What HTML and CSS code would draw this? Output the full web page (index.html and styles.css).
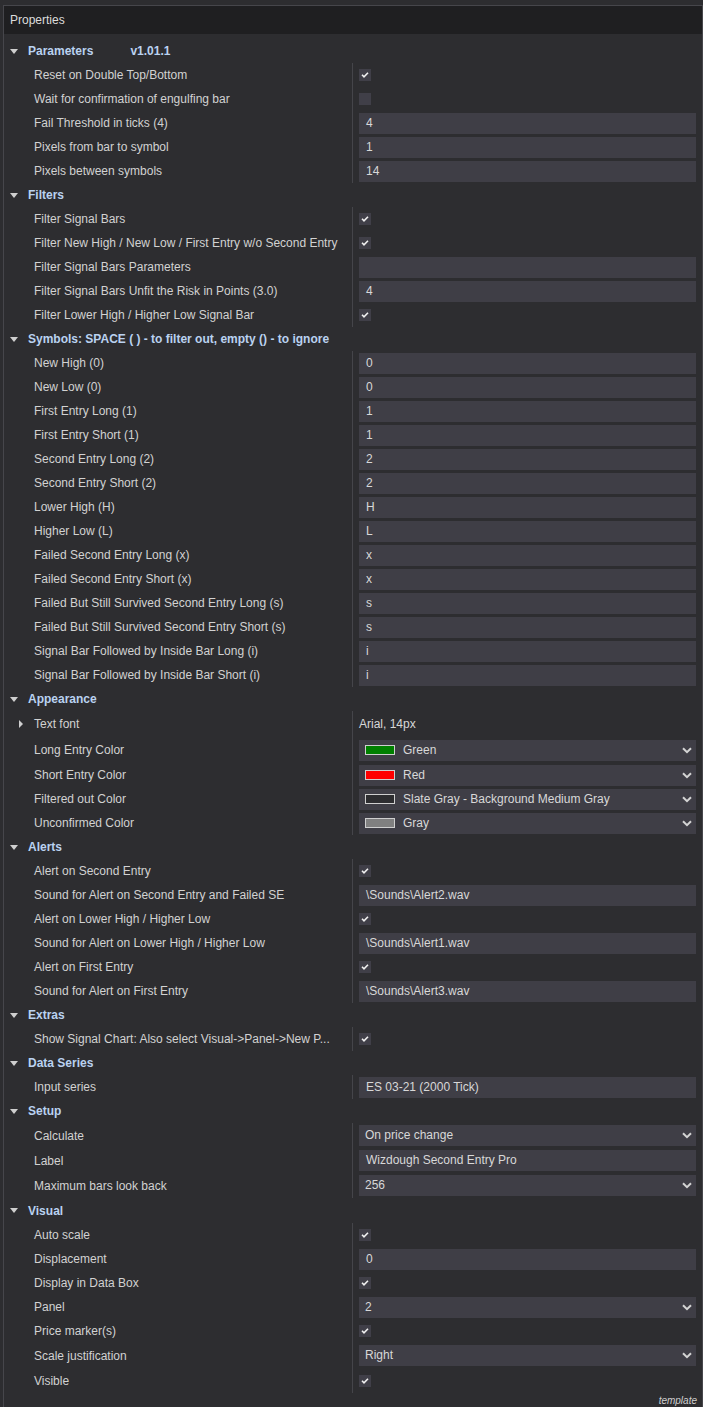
FILE: index.html
```html
<!DOCTYPE html>
<html>
<head>
	<meta charset="UTF-8">
	<title>Properties</title>
	<link rel="stylesheet" href="styles.css">
</head>
<body>
<div class="panel">
	<div class="title">Properties</div>
	<div class="list">

		<div class="row cat"><span class="tri"></span>Parameters<span class="ver">v1.01.1</span></div>
		<div class="row item"><div class="label">Reset on Double Top/Bottom</div><div class="value"><span class="check on"></span></div></div>
		<div class="row item"><div class="label">Wait for confirmation of engulfing bar</div><div class="value"><span class="check"></span></div></div>
		<div class="row item"><div class="label">Fail Threshold in ticks (4)</div><div class="value"><div class="field">4</div></div></div>
		<div class="row item"><div class="label">Pixels from bar to symbol</div><div class="value"><div class="field">1</div></div></div>
		<div class="row item"><div class="label">Pixels between symbols</div><div class="value"><div class="field">14</div></div></div>

		<div class="row cat"><span class="tri"></span>Filters</div>
		<div class="row item"><div class="label">Filter Signal Bars</div><div class="value"><span class="check on"></span></div></div>
		<div class="row item"><div class="label">Filter New High / New Low / First Entry w/o Second Entry</div><div class="value"><span class="check on"></span></div></div>
		<div class="row item"><div class="label">Filter Signal Bars Parameters</div><div class="value"><div class="field"></div></div></div>
		<div class="row item"><div class="label">Filter Signal Bars Unfit the Risk in Points (3.0)</div><div class="value"><div class="field">4</div></div></div>
		<div class="row item"><div class="label">Filter Lower High / Higher Low Signal Bar</div><div class="value"><span class="check on"></span></div></div>

		<div class="row cat"><span class="tri"></span>Symbols: SPACE ( ) - to filter out, empty () - to ignore</div>
		<div class="row item"><div class="label">New High (0)</div><div class="value"><div class="field">0</div></div></div>
		<div class="row item"><div class="label">New Low (0)</div><div class="value"><div class="field">0</div></div></div>
		<div class="row item"><div class="label">First Entry Long (1)</div><div class="value"><div class="field">1</div></div></div>
		<div class="row item"><div class="label">First Entry Short (1)</div><div class="value"><div class="field">1</div></div></div>
		<div class="row item"><div class="label">Second Entry Long (2)</div><div class="value"><div class="field">2</div></div></div>
		<div class="row item"><div class="label">Second Entry Short (2)</div><div class="value"><div class="field">2</div></div></div>
		<div class="row item"><div class="label">Lower High (H)</div><div class="value"><div class="field">H</div></div></div>
		<div class="row item"><div class="label">Higher Low (L)</div><div class="value"><div class="field">L</div></div></div>
		<div class="row item"><div class="label">Failed Second Entry Long (x)</div><div class="value"><div class="field">x</div></div></div>
		<div class="row item"><div class="label">Failed Second Entry Short (x)</div><div class="value"><div class="field">x</div></div></div>
		<div class="row item"><div class="label">Failed But Still Survived Second Entry Long (s)</div><div class="value"><div class="field">s</div></div></div>
		<div class="row item"><div class="label">Failed But Still Survived Second Entry Short (s)</div><div class="value"><div class="field">s</div></div></div>
		<div class="row item"><div class="label">Signal Bar Followed by Inside Bar Long (i)</div><div class="value"><div class="field">i</div></div></div>
		<div class="row item"><div class="label">Signal Bar Followed by Inside Bar Short (i)</div><div class="value"><div class="field">i</div></div></div>

		<div class="row cat"><span class="tri"></span>Appearance</div>
		<div class="row item h26"><div class="label"><span class="tri-r"></span>Text font</div><div class="value"><span class="plain">Arial, 14px</span></div></div>
		<div class="row item h26"><div class="label">Long Entry Color</div><div class="value"><div class="field select"><span class="swatch green"></span>Green<span class="chev"></span></div></div></div>
		<div class="row item"><div class="label">Short Entry Color</div><div class="value"><div class="field select"><span class="swatch red"></span>Red<span class="chev"></span></div></div></div>
		<div class="row item"><div class="label">Filtered out Color</div><div class="value"><div class="field select"><span class="swatch slate"></span>Slate Gray - Background Medium Gray<span class="chev"></span></div></div></div>
		<div class="row item"><div class="label">Unconfirmed Color</div><div class="value"><div class="field select"><span class="swatch gray"></span>Gray<span class="chev"></span></div></div></div>

		<div class="row cat"><span class="tri"></span>Alerts</div>
		<div class="row item"><div class="label">Alert on Second Entry</div><div class="value"><span class="check on"></span></div></div>
		<div class="row item"><div class="label">Sound for Alert on Second Entry and Failed SE</div><div class="value"><div class="field">\Sounds\Alert2.wav</div></div></div>
		<div class="row item"><div class="label">Alert on Lower High / Higher Low</div><div class="value"><span class="check on"></span></div></div>
		<div class="row item"><div class="label">Sound for Alert on Lower High / Higher Low</div><div class="value"><div class="field">\Sounds\Alert1.wav</div></div></div>
		<div class="row item"><div class="label">Alert on First Entry</div><div class="value"><span class="check on"></span></div></div>
		<div class="row item"><div class="label">Sound for Alert on First Entry</div><div class="value"><div class="field">\Sounds\Alert3.wav</div></div></div>

		<div class="row cat"><span class="tri"></span>Extras</div>
		<div class="row item"><div class="label">Show Signal Chart: Also select Visual-&gt;Panel-&gt;New P...</div><div class="value"><span class="check on"></span></div></div>

		<div class="row cat"><span class="tri"></span>Data Series</div>
		<div class="row item"><div class="label">Input series</div><div class="value"><div class="field">ES 03-21 (2000 Tick)</div></div></div>

		<div class="row cat"><span class="tri"></span>Setup</div>
		<div class="row item h25"><div class="label">Calculate</div><div class="value"><div class="field select">On price change<span class="chev"></span></div></div></div>
		<div class="row item h25"><div class="label">Label</div><div class="value"><div class="field">Wizdough Second Entry Pro</div></div></div>
		<div class="row item h25"><div class="label">Maximum bars look back</div><div class="value"><div class="field select">256<span class="chev"></span></div></div></div>

		<div class="row cat h25"><span class="tri"></span>Visual</div>
		<div class="row item"><div class="label">Auto scale</div><div class="value"><span class="check on"></span></div></div>
		<div class="row item"><div class="label">Displacement</div><div class="value"><div class="field">0</div></div></div>
		<div class="row item"><div class="label">Display in Data Box</div><div class="value"><span class="check on"></span></div></div>
		<div class="row item"><div class="label">Panel</div><div class="value"><div class="field select">2<span class="chev"></span></div></div></div>
		<div class="row item"><div class="label">Price marker(s)</div><div class="value"><span class="check on"></span></div></div>
		<div class="row item h25"><div class="label">Scale justification</div><div class="value"><div class="field select">Right<span class="chev"></span></div></div></div>
		<div class="row item h25"><div class="label">Visible</div><div class="value"><span class="check on"></span></div></div>
	</div>
	<div class="footer">template</div>
</div>
</body>
</html>
```

FILE: styles.css
```css
body {
	margin: 0;
	background-color: #2d2d30;
	font-family: "Liberation Sans", Arial, sans-serif;
	font-size: 12px;
	color: #d2d2d2;
	overflow: hidden;
}

.panel {
	margin: 5px 0 0 3px;
	border: 1px solid #46464b;
	border-bottom: none;
	height: 1410px;
}

.title {
	height: 28px;
	line-height: 28px;
	padding-left: 6px;
	background-color: #1f1f21;
	color: #dcdcdc;
}

.list {
	padding-top: 5px;
}

.row {
	display: flex;
	align-items: center;
	height: 24px;
}

.row.h25 {
	height: 25px;
}

.row.h26 {
	height: 26px;
}

.cat {
	font-weight: bold;
	color: #bad2f0;
}

.tri {
	width: 0;
	height: 0;
	margin: 0 10px 0 6px;
	border-left: 4px solid transparent;
	border-right: 4px solid transparent;
	border-top: 5px solid #cfcfcf;
}

.ver {
	margin-left: 37px;
}

.item .label {
	width: 349px;
	height: 100%;
	box-sizing: border-box;
	padding-left: 30px;
	border-right: 1px solid #45454a;
	display: flex;
	align-items: center;
	white-space: nowrap;
	overflow: hidden;
	position: relative;
}

.tri-r {
	position: absolute;
	left: 15px;
	top: 9px;
	width: 0;
	height: 0;
	border-top: 4px solid transparent;
	border-bottom: 4px solid transparent;
	border-left: 4px solid #cfcfcf;
}

.item .value {
	flex: 1;
	height: 100%;
	padding: 0 6px;
	display: flex;
	align-items: center;
	min-width: 0;
}

.field {
	width: 100%;
	height: 21px;
	line-height: 21px;
	box-sizing: border-box;
	padding-left: 7px;
	background-color: #3f3e46;
	color: #d8d8d8;
	white-space: nowrap;
}

.field.select {
	display: flex;
	align-items: center;
	padding-left: 6px;
}

.swatch {
	width: 30px;
	height: 10px;
	box-sizing: border-box;
	border: 1px solid #cfcfcf;
	margin-right: 8px;
}

.swatch.green { background-color: #008000; }
.swatch.red { background-color: #ff0000; }
.swatch.slate { background-color: #2d2d30; }
.swatch.gray { background-color: #808080; }

.chev {
	margin-left: auto;
	margin-right: 4px;
	width: 10px;
	height: 7px;
	background: url("data:image/svg+xml,%3Csvg xmlns='http://www.w3.org/2000/svg' width='10' height='7'%3E%3Cpath d='M1 1.2 L5 5.2 L9 1.2' fill='none' stroke='%23d4d4d4' stroke-width='2'/%3E%3C/svg%3E") no-repeat;
}

.check {
	width: 12px;
	height: 12px;
	background-color: #403f48;
}

.check.on {
	background: #403f48 url("data:image/svg+xml,%3Csvg xmlns='http://www.w3.org/2000/svg' width='12' height='12'%3E%3Cpath d='M3 5.8 L5 7.8 L9 3.8' fill='none' stroke='%23f0f0f0' stroke-width='1.6'/%3E%3C/svg%3E") no-repeat;
}

.plain {
	color: #d8d8d8;
}

.footer {
	text-align: right;
	padding: 2px 5px 0 0;
	font-size: 10px;
	line-height: 12px;
	font-style: italic;
	color: #cfcfcf;
}
```
